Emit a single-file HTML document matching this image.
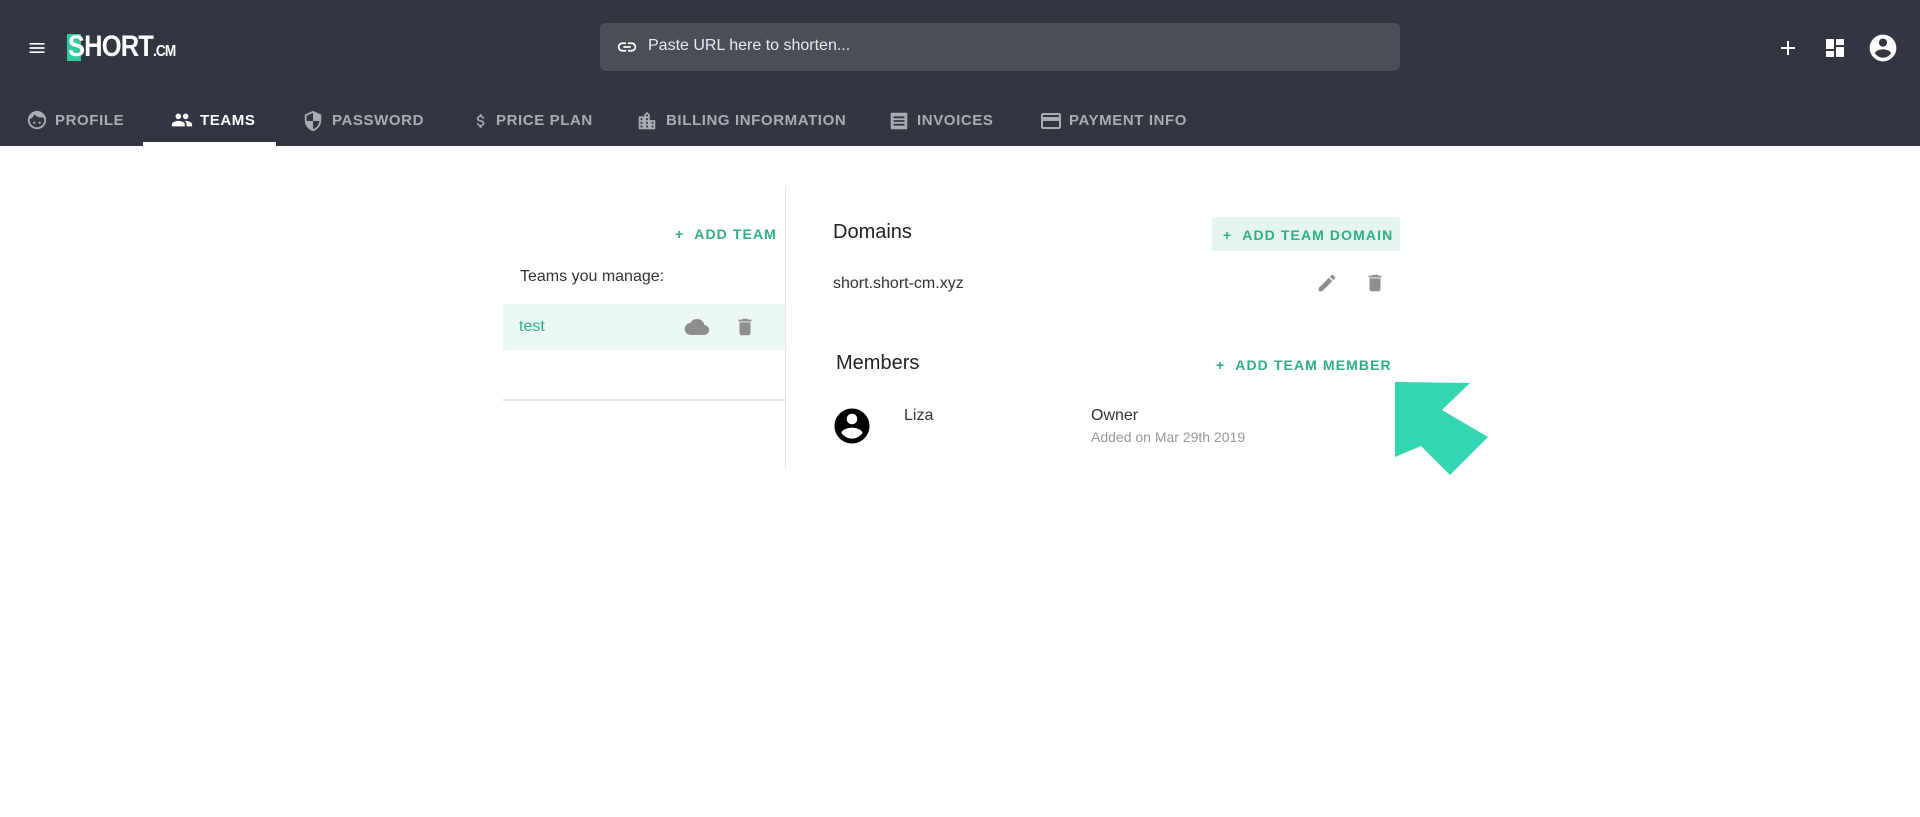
<!DOCTYPE html>
<html><head><meta charset="utf-8"><style>
*{margin:0;padding:0;box-sizing:border-box}
body{width:1920px;height:817px;background:#fff;font-family:"Liberation Sans",Roboto,sans-serif;position:relative;overflow:hidden;color:#222}
.hdr{position:absolute;left:0;top:0;width:1920px;height:146px;background:#323640}
.a{position:absolute}
.tab{position:absolute;top:112px;font-size:15px;font-weight:bold;letter-spacing:0.6px;color:#a9acb3}
.tab svg{position:absolute;top:-3px}
.g{color:#2fae88}
.btn{font-size:14px;font-weight:bold;letter-spacing:1.1px;color:#2fae88}
</style></head><body>
<div class="hdr"></div>
<svg class="a" style="left:26px;top:38px" width="22" height="20" viewBox="0 0 24 24" fill="#fff"><path d="M3 6h18v2H3zM3 11h18v2H3zM3 16h18v2H3z"/></svg>
<div class="a" style="left:67px;top:34px;width:14px;height:27px;background:#33c9a0"></div>
<div class="a" style="left:68px;top:30px;font-size:30px;font-weight:bold;color:#fff;letter-spacing:-1px;transform:scaleX(0.85);transform-origin:left">SHORT<span style="font-size:16px">.CM</span></div>
<div class="a" style="left:600px;top:23px;width:800px;height:48px;background:#4a4e57;border-radius:6px"></div>
<svg class="a" style="left:615px;top:36px" width="24" height="22" viewBox="0 0 24 24" fill="#fff"><path d="M3.9 12c0-1.7 1.4-3.1 3.1-3.1h4V7H7c-2.8 0-5 2.2-5 5s2.2 5 5 5h4v-1.9H7c-1.7 0-3.1-1.4-3.1-3.1zM8 13h8v-2H8v2zm9-6h-4v1.9h4c1.7 0 3.1 1.4 3.1 3.1s-1.4 3.1-3.1 3.1h-4V17h4c2.8 0 5-2.2 5-5s-2.2-5-5-5z"/></svg>
<div class="a" style="left:648px;top:37px;font-size:16px;color:#e8e9eb">Paste URL here to shorten...</div>
<svg class="a" style="left:1776px;top:36px" width="24" height="24" viewBox="0 0 24 24" fill="#fff"><path d="M19 13h-6v6h-2v-6H5v-2h6V5h2v6h6v2z"/></svg>
<svg class="a" style="left:1823px;top:36px" width="24" height="24" viewBox="0 0 24 24" fill="#fff"><path d="M3 3h8v10H3zM13 3h8v6h-8zM13 11h8v10h-8zM3 15h8v6H3z"/></svg>
<svg class="a" style="left:1867px;top:32px" width="32" height="32" viewBox="0 0 24 24" fill="#fff"><path d="M12 2C6.5 2 2 6.5 2 12s4.5 10 10 10 10-4.5 10-10S17.5 2 12 2zm0 3c1.7 0 3 1.3 3 3s-1.3 3-3 3-3-1.3-3-3 1.3-3 3-3zm0 14.2c-2.5 0-4.7-1.3-6-3.2 0-2 4-3.1 6-3.1s6 1.1 6 3.1c-1.3 1.9-3.5 3.2-6 3.2z"/></svg>

<div class="tab" style="left:55px"><svg style="left:-29px" width="22" height="22" viewBox="0 0 24 24" fill="#a9acb3"><path d="M12 2C6.5 2 2 6.5 2 12s4.5 10 10 10 10-4.5 10-10S17.5 2 12 2zm0 18c-4.4 0-8-3.6-8-8 0-.3 0-.6.1-.9 2.4-1 4.3-3 5.2-5.4C10.9 8 13.6 9.3 16.6 9.3c.7 0 1.4-.1 2-.2.9 1 1.4 2.2 1.4 2.9 0 4.4-3.6 8-8 8zM9 13.8a1.2 1.2 0 100 2.4 1.2 1.2 0 000-2.4zm6 0a1.2 1.2 0 100 2.4 1.2 1.2 0 000-2.4z"/></svg>PROFILE</div>
<div class="tab" style="left:200px;color:#fff"><svg style="left:-30px" width="24" height="22" viewBox="0 0 24 24" fill="#fff"><path d="M16 11c1.7 0 3-1.3 3-3s-1.3-3-3-3-3 1.3-3 3 1.3 3 3 3zm-8 0c1.7 0 3-1.3 3-3S9.7 5 8 5 5 6.3 5 8s1.3 3 3 3zm0 2c-2.3 0-7 1.2-7 3.5V19h14v-2.5C15 14.2 10.3 13 8 13zm8 0c-.3 0-.6 0-1 .1 1.2.8 2 2 2 3.4V19h6v-2.5c0-2.3-4.7-3.5-7-3.5z"/></svg>TEAMS</div>
<div class="a" style="left:143px;top:142px;width:133px;height:4px;background:#fff"></div>
<div class="tab" style="left:332px"><svg style="left:-30px" width="22" height="24" viewBox="0 0 24 24" fill="#a9acb3"><path d="M12 1L3 5v6c0 5.6 3.8 10.7 9 12 5.2-1.3 9-6.4 9-12V5l-9-4zm0 11h7c-.5 4.1-3.3 7.8-7 8.9V12H5V6.3l7-3.1V12z"/></svg>PASSWORD</div>
<div class="tab" style="left:496px"><svg style="left:-24px" width="18" height="24" viewBox="0 0 24 24" fill="#a9acb3"><path d="M11.8 10.9c-2.3-.6-3-1.2-3-2.1 0-1.1 1-1.9 2.7-1.9 1.8 0 2.4.8 2.5 2.1h2.2c-.1-1.7-1.1-3.300-3.2-3.8V3h-3v2.2C8.1 5.6 6.5 6.9 6.5 8.8c0 2.3 1.9 3.4 4.7 4.1 2.5.6 3 1.5 3 2.4 0 .7-.5 1.8-2.7 1.8-2.1 0-2.9-.9-3-2.1H6.3c.1 2.2 1.8 3.4 3.7 3.8V21h3v-2.2c1.9-.4 3.5-1.5 3.5-3.5 0-2.8-2.4-3.8-4.7-4.4z"/></svg>PRICE PLAN</div>
<div class="tab" style="left:666px"><svg style="left:-30px" width="22" height="24" viewBox="0 0 24 24" fill="#a9acb3"><path d="M15 11V5l-3-3-3 3v2H3v14h18V11h-6zm-8 8H5v-2h2v2zm0-4H5v-2h2v2zm0-4H5V9h2v2zm6 8h-2v-2h2v2zm0-4h-2v-2h2v2zm0-4h-2V9h2v2zm0-4h-2V5h2v2zm6 12h-2v-2h2v2zm0-4h-2v-2h2v2z"/></svg>BILLING INFORMATION</div>
<div class="tab" style="left:917px"><svg style="left:-29px" width="22" height="24" viewBox="0 0 24 24" fill="#a9acb3"><path d="M3 3h18v18H3zM6 7v2h12V7zm0 4v2h12v-2zm0 4v2h12v-2z"/></svg>INVOICES</div>
<div class="tab" style="left:1069px"><svg style="left:-30px" width="24" height="24" viewBox="0 0 24 24" fill="#a9acb3"><path d="M20 4H4c-1.1 0-2 .9-2 2v12c0 1.1.9 2 2 2h16c1.1 0 2-.9 2-2V6c0-1.1-.9-2-2-2zm0 14H4v-6h16v6zm0-10H4V6h16v2z"/></svg>PAYMENT INFO</div>

<div class="a" style="left:785px;top:186px;width:1px;height:283px;background:#e6e6e6"></div>
<div class="a btn" style="left:675px;top:226px">+&nbsp;&nbsp;ADD TEAM</div>
<div class="a" style="left:520px;top:268px;font-size:16px;color:#333">Teams you manage:</div>
<div class="a" style="left:503px;top:304px;width:282px;height:46px;background:#eaf7f2"></div>
<div class="a g" style="left:519px;top:318px;font-size:16px">test</div>
<svg class="a" style="left:684px;top:315px" width="26" height="24" viewBox="0 0 24 24" fill="#8e8e8e"><path d="M19.4 10A7.5 7.5 0 0012 4C9.1 4 6.6 5.6 5.4 8A6 6 0 006 20h13a5 5 0 00.4-10z"/></svg>
<svg class="a" style="left:734px;top:315px" width="22" height="24" viewBox="0 0 24 24" fill="#8e8e8e"><path d="M6 19c0 1.1.9 2 2 2h8c1.1 0 2-.9 2-2V7H6v12zM19 4h-3.5l-1-1h-5l-1 1H5v2h14V4z"/></svg>
<div class="a" style="left:503px;top:399px;width:282px;height:2px;background:#e4e4e4"></div>

<div class="a" style="left:833px;top:221px;font-size:20px;color:#222">Domains</div>
<div class="a" style="left:1212px;top:217px;width:188px;height:34px;background:#e3f5ee;border-radius:3px"></div>
<div class="a btn" style="left:1223px;top:227px">+&nbsp;&nbsp;ADD TEAM DOMAIN</div>
<div class="a" style="left:833px;top:275px;font-size:16px;color:#333">short.short-cm.xyz</div>
<svg class="a" style="left:1316px;top:272px" width="22" height="22" viewBox="0 0 24 24" fill="#8e8e8e"><path d="M3 17.25V21h3.75L17.8 9.9l-3.7-3.7L3 17.25zM20.7 7c.4-.4.4-1 0-1.4l-2.3-2.3c-.4-.4-1-.4-1.4 0l-1.8 1.8 3.7 3.7L20.7 7z"/></svg>
<svg class="a" style="left:1364px;top:271px" width="22" height="24" viewBox="0 0 24 24" fill="#8e8e8e"><path d="M6 19c0 1.1.9 2 2 2h8c1.1 0 2-.9 2-2V7H6v12zM19 4h-3.5l-1-1h-5l-1 1H5v2h14V4z"/></svg>

<div class="a" style="left:836px;top:352px;font-size:20px;color:#222">Members</div>
<div class="a btn" style="left:1216px;top:357px">+&nbsp;&nbsp;ADD TEAM MEMBER</div>
<svg class="a" style="left:831px;top:405px" width="42" height="42" viewBox="0 0 24 24" fill="#000"><path d="M12 2C6.5 2 2 6.5 2 12s4.5 10 10 10 10-4.5 10-10S17.5 2 12 2zm0 3c1.7 0 3 1.3 3 3s-1.3 3-3 3-3-1.3-3-3 1.3-3 3-3zm0 14.2c-2.5 0-4.7-1.3-6-3.2 0-2 4-3.1 6-3.1s6 1.1 6 3.1c-1.3 1.9-3.5 3.2-6 3.2z"/></svg>
<div class="a" style="left:904px;top:407px;font-size:16px;color:#333">Liza</div>
<div class="a" style="left:1091px;top:407px;font-size:16px;color:#333">Owner</div>
<div class="a" style="left:1091px;top:429px;font-size:14px;color:#999">Added on Mar 29th 2019</div>

<svg class="a" style="left:0;top:0" width="1920" height="817"><polygon fill="#33d6b0" points="1395,382 1470,383 1442,410 1488,437 1450,475 1421,446 1395,457"/></svg>
</body></html>
